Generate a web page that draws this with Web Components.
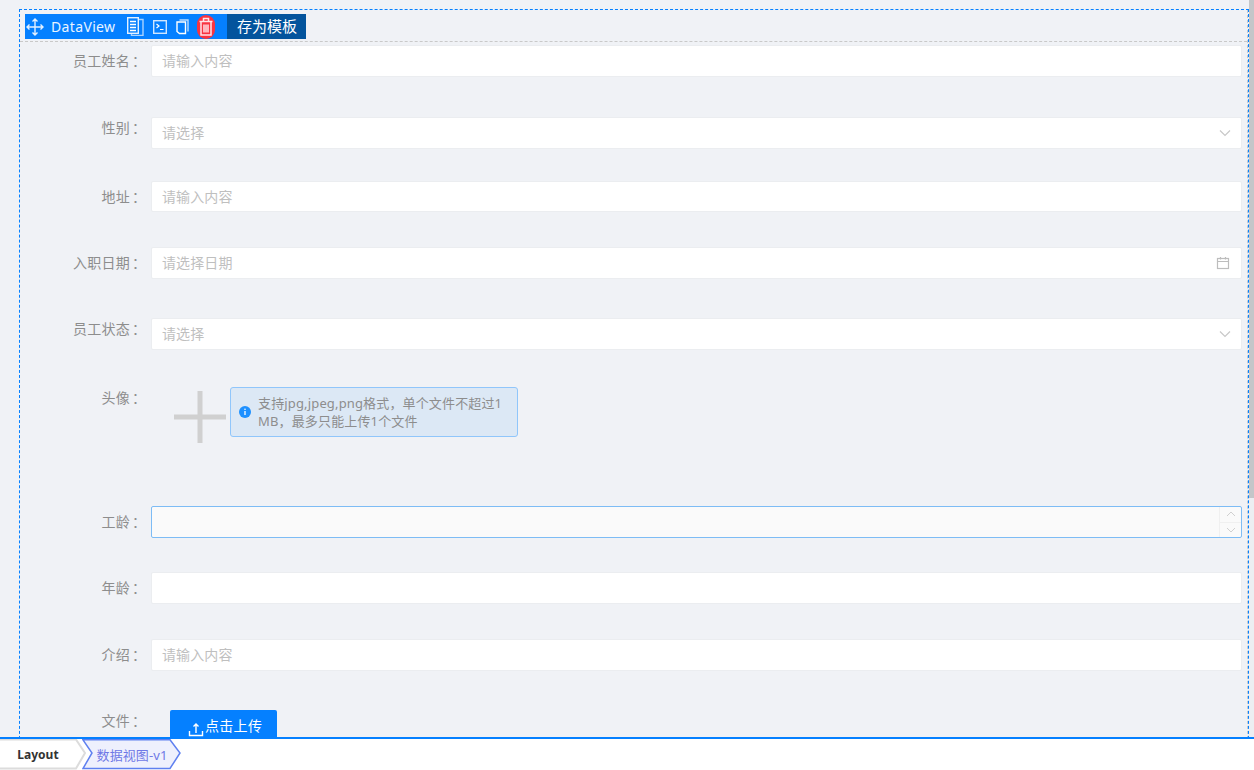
<!DOCTYPE html>
<html>
<head>
<meta charset="utf-8">
<style>
  html, body { margin: 0; height: 770px; overflow: hidden; background: #fff; }
  body { font-family: "Noto Sans", "Noto Sans CJK SC", sans-serif; }
</style>
</head>
<body>
<designer-page>
  <design-frame>
    <frame-toolbar slot="toolbar"></frame-toolbar>
    <form-row label="员工姓名" gap="40" top="3"><text-field placeholder="请输入内容"></text-field></form-row>
    <form-row label="性别" gap="32" lift><text-field placeholder="请选择" icon="down"></text-field></form-row>
    <form-row label="地址" gap="34"><text-field short placeholder="请输入内容"></text-field></form-row>
    <form-row label="入职日期" gap="39"><text-field placeholder="请选择日期" icon="date"></text-field></form-row>
    <form-row label="员工状态" gap="37" lift><text-field placeholder="请选择" icon="down"></text-field></form-row>
    <form-row label="头像" gap="69" lift><avatar-upload></avatar-upload></form-row>
    <form-row label="工龄" gap="34"><text-field focused icon="spin"></text-field></form-row>
    <form-row label="年龄" gap="35"><text-field></text-field></form-row>
    <form-row label="介绍" gap="39"><text-field placeholder="请输入内容"></text-field></form-row>
    <form-row label="文件" gap="0" lift><upload-button></upload-button></form-row>
  </design-frame>
  <tab-bar></tab-bar>
</designer-page>

<script>
class DesignerPage extends HTMLElement {
  constructor () {
    super();
    this.attachShadow({ mode: "open" });
    this.shadowRoot.innerHTML = `
      <style>
        :host { display: flex; flex-direction: column; width: 1254px; height: 770px; color: #606266; font-size: 14px; }
        .canvas { flex: 1; min-height: 0; overflow: hidden; background: #f0f2f6; padding: 9px 5px 0 19px; position: relative; }
        .bar { position: absolute; top: 0; right: 0; width: 5px; height: 100%; background: #eceef2; }
        .thumb { height: 498px; background: #c4c6c9; }
      </style>
      <div class="canvas"><slot></slot><div class="bar"><div class="thumb"></div></div></div>
      <slot name="footer"></slot>
    `;
  }
  connectedCallback () {
    const tabs = this.querySelector("tab-bar");
    if (tabs) tabs.slot = "footer";
  }
}

class DesignFrame extends HTMLElement {
  constructor () {
    super();
    this.attachShadow({ mode: "open" });
    this.shadowRoot.innerHTML = `
      <style>
        :host { display: block; border: 1px dashed #0580ff; border-bottom: 0; height: 760px; box-sizing: border-box; }
        .inner { border-right: 1px dashed #c9c9c9; height: 100%; }
        .head { padding: 4px 0 2px 5px; border-bottom: 1px dashed #c9c9c9; height: 25px; }
      </style>
      <div class="inner">
        <div class="head"><slot name="toolbar"></slot></div>
        <slot></slot>
      </div>
    `;
  }
}

class FrameToolbar extends HTMLElement {
  constructor () {
    super();
    this.attachShadow({ mode: "open" });
    this.shadowRoot.innerHTML = `
      <style>
        :host { display: inline-flex; align-items: center; height: 25px; background: #0580ff; color: #fff; font-size: 14px; }
        svg { display: block; fill: none; stroke: #e3f0ff; stroke-width: 1.4; flex: none; }
        .name { margin: 0 12px 0 7px; letter-spacing: .35px; color: #e9f4ff; line-height: 25px; }
        .move { margin-left: 1px; }
        .doc { margin-right: 9px; }
        .term { margin-right: 9px; }
        .copy { margin-right: 8px; }
        .trash { margin-right: 12px; }
        .save { height: 25px; line-height: 25px; width: 79px; text-align: center; background: #03549d; font-size: 15px; }
      </style>
      <svg class="move" width="18" height="18" viewBox="0 0 18 18">
        <path d="M9 1v16M1 9h16M6.5 3.5 9 1l2.5 2.5M6.5 14.5 9 17l2.5-2.5M3.5 6.5 1 9l2.5 2.5M14.5 6.5 17 9l-2.5 2.5"/>
      </svg>
      <span class="name">DataView</span>
      <svg class="doc" width="17" height="19" viewBox="0 0 17 19">
        <path d="M11.5 2.5h4.5v16H4.5v-2" stroke="#a9d2ff"/>
        <rect x=".7" y=".7" width="10.6" height="15.6" fill="#0580ff"/>
        <path d="M3 4.5h6M3 7.5h6M3 10.5h6M3 13.5h6" stroke="#fff"/>
      </svg>
      <svg class="term" width="14" height="14" viewBox="0 0 14 14">
        <rect x=".7" y=".7" width="12.6" height="12.6" stroke="#cfe6ff"/><path d="M3.5 4 6 6 3.5 8M7 9.5h3.5" stroke="#fff" stroke-width="1.2"/>
      </svg>
      <svg class="copy" width="13" height="16" viewBox="0 0 13 16">
        <path d="M3.5 1h8.5v11.5" stroke="#bcdcff"/><path d="M1 3h8.5v11.5H3.5L1 12.5z" stroke="#fff"/>
      </svg>
      <svg class="trash" width="18" height="24" viewBox="0 0 18 24">
        <rect width="18" height="24" rx="9" fill="#f93340" stroke="none"/>
        <path d="M2.5 6.5h13M6.5 6V3.5h5V6M4 7v13h10V7M7 9.5v8M9 9.5v8M11 9.5v8" stroke="#ffe4e8" stroke-width="1.5"/>
      </svg>
      <div class="save">存为模板</div>
    `;
  }
}

class FormRow extends HTMLElement {
  constructor () {
    super();
    this.attachShadow({ mode: "open" });
    const gap = this.getAttribute("gap") || 0;
    const top = this.getAttribute("top") || 0;
    this.shadowRoot.innerHTML = `
      <style>
        :host { display: flex; margin-top: ${top}px; margin-bottom: ${gap}px; margin-right: 5px; }
        label { width: 126px; flex: none; text-align: right; padding-right: 5px; color: #8d8d8d; line-height: 32px; font-size: 14px; }
        :host([lift]) label { line-height: 22px; }
        .name { letter-spacing: .25px; }
        .colon { margin-left: 2px; }
        .ctl { flex: 1; min-width: 0; }
      </style>
      <label><span class="name"></span><span class="colon">：</span></label>
      <div class="ctl"><slot></slot></div>
    `;
    this.shadowRoot.querySelector(".name").textContent = this.getAttribute("label");
  }
}

const ICONS = {
  down: `<svg width="12" height="8" viewBox="0 0 12 8"><path d="M1 1.5 6 6.5l5-5" fill="none" stroke="#c8c8c8" stroke-width="1.2"/></svg>`,
  date: `<svg style="margin-right:1px" width="14" height="14" viewBox="0 0 14 14" fill="none" stroke="#bdbdbd" stroke-width="1.2"><rect x="1.5" y="2.5" width="11" height="10"/><path d="M1.5 5.5h11M4.5 1v2.5M9.5 1v2.5"/></svg>`
};

class TextField extends HTMLElement {
  constructor () {
    super();
    this.attachShadow({ mode: "open" });
    const icon = this.getAttribute("icon");
    let tail = "";
    if (icon === "spin") {
      tail = `<div class="spin">
        <div><svg width="10" height="6" viewBox="0 0 10 6"><path d="M1 5 5 1l4 4" fill="none" stroke="#d0d0d0"/></svg></div>
        <div><svg width="10" height="6" viewBox="0 0 10 6"><path d="M1 1 5 5l4-4" fill="none" stroke="#d0d0d0"/></svg></div>
      </div>`;
    } else if (icon) {
      tail = `<span class="icon">${ICONS[icon]}</span>`;
    }
    this.shadowRoot.innerHTML = `
      <style>
        :host { display: flex; align-items: center; height: 32px; box-sizing: border-box; background: #fff; border: 1px solid #ebedf0; border-radius: 2px; padding-left: 10px; font-size: 14px; }
        :host([short]) { height: 31px; }
        :host([focused]) { border-color: #7dbcf5; background: #fafafa; }
        .ph { flex: 1; color: #bfbfbf; line-height: 20px; padding-bottom: 1px; letter-spacing: .1px; }
        :host([short]) .ph { padding: 1px 0 0; }
        .icon { display: flex; align-items: center; margin-right: 10px; }
        .spin { display: flex; flex-direction: column; width: 21px; height: 100%; border-left: 1px solid #f0f0f0; }
        .spin div { flex: 1; display: flex; align-items: center; justify-content: center; }
        .spin div + div { border-top: 1px solid #f0f0f0; }
      </style>
      <span class="ph"></span>${tail}
    `;
    this.shadowRoot.querySelector(".ph").textContent = this.getAttribute("placeholder") || "";
  }
}

class AvatarUpload extends HTMLElement {
  constructor () {
    super();
    this.attachShadow({ mode: "open" });
    this.shadowRoot.innerHTML = `
      <style>
        :host { display: flex; align-items: flex-start; height: 50px; }
        .plus { width: 52px; height: 52px; margin: 4px 4px 0 23px; flex: none; }
        .tip { box-sizing: border-box; width: 288px; height: 50px; background: #dce8f5; border: 1px solid #90c6fb; border-radius: 3px; display: flex; align-items: center; padding: 0 8px; color: #8d8d8d; font-size: 13px; line-height: 18px; letter-spacing: .15px; word-break: break-all; }
        .tip svg { flex: none; margin-right: 7px; }
      </style>
      <svg class="plus" viewBox="0 0 52 52"><path d="M26 0v52M0 26h52" stroke="#d0d0d0" stroke-width="5" stroke-linecap="round"/></svg>
      <div class="tip">
        <svg width="12" height="12" viewBox="0 0 12 12"><circle cx="6" cy="6" r="6" fill="#1e90ff"/><path d="M6 5v4" stroke="#fff" stroke-width="1.3"/><circle cx="6" cy="3.2" r=".8" fill="#fff"/></svg>
        <span>支持jpg,jpeg,png格式，单个文件不超过1MB，最多只能上传1个文件</span>
      </div>
    `;
  }
}

class UploadButton extends HTMLElement {
  constructor () {
    super();
    this.attachShadow({ mode: "open" });
    this.shadowRoot.innerHTML = `
      <style>
        :host { display: flex; align-items: flex-start; margin-left: 19px; padding: 7px 0 0 18px; box-sizing: border-box; width: 107px; height: 32px; background: #0580ff; color: #fff; font-size: 14px; line-height: 18px; border-radius: 2px; }
        svg { margin: 4px 1px 0 0; flex: none; }
        span { letter-spacing: .3px; }
      </style>
      <svg width="16" height="16" viewBox="0 0 16 16" fill="none" stroke="#fff" stroke-width="1.4"><path d="M8 12V3M5.5 5.5 8 3l2.5 2.5M1.5 10v4.5h13V10"/></svg>
      <span>点击上传</span>
    `;
  }
}

class TabBar extends HTMLElement {
  constructor () {
    super();
    this.attachShadow({ mode: "open" });
    this.shadowRoot.innerHTML = `
      <style>
        :host { display: flex; height: 33px; box-sizing: border-box; border-top: 2px solid #0580ff; background: #fff; font-size: 12px; font-weight: bold; }
        .tab { position: relative; height: 31px; display: flex; align-items: center; justify-content: center; }
        .tab svg { position: absolute; left: 0; top: 0; }
        .tab span { position: relative; }
        .layout { width: 82px; color: #333; }
        .layout span { left: -3px; }
        .view { width: 100px; color: #6f78e6; font-size: 13px; font-weight: normal; letter-spacing: .1px; }
      </style>
      <div class="tab layout">
        <svg width="88" height="31" viewBox="0 0 88 31"><path d="M0 .5H76L85 14 76 29.5H0" fill="#fff" stroke="#dcdcdc" stroke-width="2"/></svg>
        <span>Layout</span>
      </div>
      <div class="tab view">
        <svg width="100" height="31" viewBox="0 0 100 31"><path d="M1 .8H88L98 14 88 29.5H1L10 14z" fill="#eef0fd" stroke="#5f80f0" stroke-width="1.5"/></svg>
        <span>数据视图-v1</span>
      </div>
    `;
  }
}

customElements.define("designer-page", DesignerPage);
customElements.define("design-frame", DesignFrame);
customElements.define("frame-toolbar", FrameToolbar);
customElements.define("form-row", FormRow);
customElements.define("text-field", TextField);
customElements.define("avatar-upload", AvatarUpload);
customElements.define("upload-button", UploadButton);
customElements.define("tab-bar", TabBar);
</script>
</body>
</html>
